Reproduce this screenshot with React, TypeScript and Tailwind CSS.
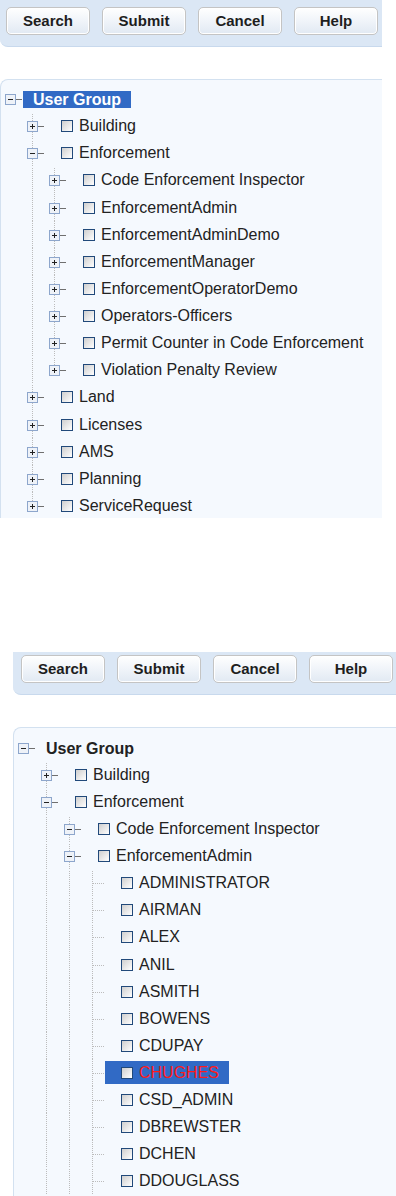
import React from 'react';

type Kind = 'plus' | 'minus' | 'leaf';

interface Node {
  depth: number;
  kind: Kind;
  label: string;
  last?: boolean;
  selected?: boolean;
}

const topTree: Node[] = [
  { depth: 0, kind: 'minus', label: 'User Group', selected: true },
  { depth: 1, kind: 'plus', label: 'Building' },
  { depth: 1, kind: 'minus', label: 'Enforcement' },
  { depth: 2, kind: 'plus', label: 'Code Enforcement Inspector' },
  { depth: 2, kind: 'plus', label: 'EnforcementAdmin' },
  { depth: 2, kind: 'plus', label: 'EnforcementAdminDemo' },
  { depth: 2, kind: 'plus', label: 'EnforcementManager' },
  { depth: 2, kind: 'plus', label: 'EnforcementOperatorDemo' },
  { depth: 2, kind: 'plus', label: 'Operators-Officers' },
  { depth: 2, kind: 'plus', label: 'Permit Counter in Code Enforcement' },
  { depth: 2, kind: 'plus', label: 'Violation Penalty Review', last: true },
  { depth: 1, kind: 'plus', label: 'Land' },
  { depth: 1, kind: 'plus', label: 'Licenses' },
  { depth: 1, kind: 'plus', label: 'AMS' },
  { depth: 1, kind: 'plus', label: 'Planning' },
  { depth: 1, kind: 'plus', label: 'ServiceRequest', last: true },
];

const users = [
  'ADMINISTRATOR', 'AIRMAN', 'ALEX', 'ANIL', 'ASMITH', 'BOWENS', 'CDUPAY',
  'CHUGHES', 'CSD_ADMIN', 'DBREWSTER', 'DCHEN', 'DDOUGLASS',
];

const bottomTree: Node[] = [
  { depth: 0, kind: 'minus', label: 'User Group' },
  { depth: 1, kind: 'plus', label: 'Building' },
  { depth: 1, kind: 'minus', label: 'Enforcement' },
  { depth: 2, kind: 'minus', label: 'Code Enforcement Inspector' },
  { depth: 2, kind: 'minus', label: 'EnforcementAdmin' },
  ...users.map((u) => ({ depth: 3, kind: 'leaf' as Kind, label: u, selected: u === 'CHUGHES' })),
];

// one slice of the tree lines: dotted guide, expander box or leaf connector
function Cell({ width, kind, line, last }: { width: number; kind?: Kind; line: boolean; last?: boolean }) {
  const box = kind === 'plus' || kind === 'minus';
  return (
    <svg width={width} height={28} className="block shrink-0">
      {line && (
        <line x1={5.5} y1={0} x2={5.5} y2={last ? 14 : 28} stroke="#bcbcbc" strokeDasharray="1 1" />
      )}
      {box && (
        <>
          <line x1={11} y1={14.5} x2={17} y2={14.5} stroke="#6f6f6f" />
          <rect x={0.5} y={9.5} width={10} height={10} fill="#eef2f8" stroke="#8da6cc" />
          <line x1={3} y1={14.5} x2={8} y2={14.5} stroke="#222" />
          {kind === 'plus' && <line x1={5.5} y1={12} x2={5.5} y2={17} stroke="#222" />}
        </>
      )}
      {kind === 'leaf' && (
        <line x1={6} y1={14.5} x2={18} y2={14.5} stroke="#bcbcbc" strokeDasharray="1 1" />
      )}
    </svg>
  );
}

function Checkbox() {
  return <span className="block h-[12px] w-[12px] shrink-0 border border-[#21497a] bg-linear-to-br from-[#cfcfcf] to-white" />;
}

function Row({ node, indent, rowClass }: { node: Node; indent: number; rowClass: string }) {
  const guides = [];
  for (let i = 0; i < node.depth; i++) {
    guides.push(<Cell key={i} width={indent} line={i > 0} />);
  }
  return (
    <div className={`flex items-center overflow-hidden ${rowClass}`}>
      {guides}
      <Cell width={18} kind={node.kind} line={node.depth > 0} last={node.last} />
      {node.depth === 0 ? (
        <span
          className={`px-[10px] text-[16px] font-bold leading-[17px] ${
            node.selected ? 'bg-[#316ac5] text-white' : 'text-[#222]'
          }`}
        >
          {node.label}
        </span>
      ) : (
        <span
          className={`flex h-[23px] items-center gap-[6px] pl-[16px] pr-[10px] ${
            node.selected ? 'bg-[#316ac5]' : ''
          }`}
        >
          <Checkbox />
          <span className={`whitespace-nowrap text-[16px] ${node.selected ? 'text-[#ff1a1a]' : 'text-[#222]'}`}>
            {node.label}
          </span>
        </span>
      )}
    </div>
  );
}

function Button({ label }: { label: string }) {
  return (
    <div className="flex h-[28px] w-[84px] shrink-0 items-center justify-center rounded-[5px] border border-[#c4c4c4] bg-linear-to-b from-white to-[#e1e9f3] text-[15px] font-bold text-[#1e1e1e] shadow-[inset_0_0_0_1px_#ffffff]">
      {label}
    </div>
  );
}

function ButtonBar({ className }: { className: string }) {
  return (
    <div className={`flex gap-[12px] rounded-bl-[8px] border-b border-[#c8d9ed] bg-[#dbe7f5] pb-[11px] ${className}`}>
      {['Search', 'Submit', 'Cancel', 'Help'].map((b) => (
        <Button key={b} label={b} />
      ))}
    </div>
  );
}

export default function App() {
  return (
    <div className="h-[1196px] w-[396px] overflow-hidden bg-white font-['Liberation_Sans',Arial,sans-serif]">
      <ButtonBar className="w-[382px] pl-[6px] pt-[7px]" />
      <div className="h-[32px]" />
      <div className="h-[439px] w-[382px] overflow-hidden rounded-tl-[8px] border-l border-t border-[#d3e1f0] bg-[#f5f9fe] pl-[4px] pt-[5.5px]">
        {topTree.map((n, i) => (
          <Row key={i} node={n} indent={22} rowClass="h-[27.13px]" />
        ))}
      </div>
      <div className="h-[134px]" />
      <ButtonBar className="ml-[13px] w-[400px] pl-[8px] pt-[3px]" />
      <div className="h-[32px]" />
      <div className="ml-[13px] h-[480px] rounded-tl-[8px] border-l border-t border-[#d3e1f0] bg-[#f5f9fe] pl-[4px] pt-[6.5px]">
        {bottomTree.map((n, i) => (
          <Row key={i} node={n} indent={23} rowClass="h-[27.07px]" />
        ))}
      </div>
    </div>
  );
}
